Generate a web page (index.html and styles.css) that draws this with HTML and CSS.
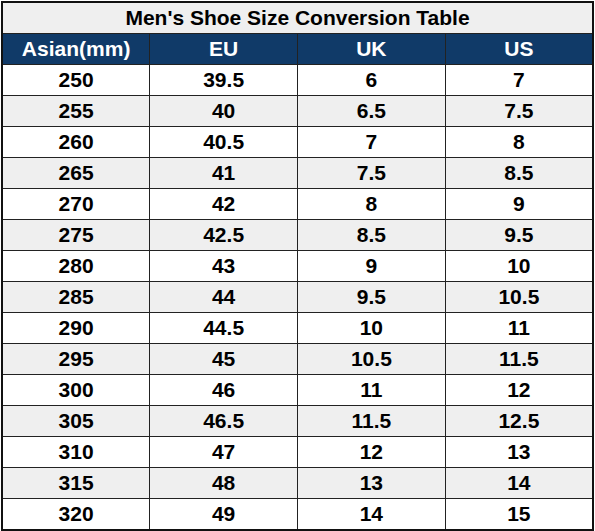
FILE: index.html
```html
<!DOCTYPE html>
<html lang="en">
<head>
  <meta charset="UTF-8" />
  <title>Men's Shoe Size Conversion Table</title>
  <link rel="stylesheet" href="styles.css">
</head>
<body>
  <table class="size-table">
    <thead>
      <tr class="title-row"><th colspan="4">Men's Shoe Size Conversion Table</th></tr>
      <tr class="head-row">
        <th>Asian(mm)</th><th>EU</th><th>UK</th><th>US</th>
      </tr>
    </thead>
    <tbody>
      <tr><td>250</td><td>39.5</td><td>6</td><td>7</td></tr>
      <tr><td>255</td><td>40</td><td>6.5</td><td>7.5</td></tr>
      <tr><td>260</td><td>40.5</td><td>7</td><td>8</td></tr>
      <tr><td>265</td><td>41</td><td>7.5</td><td>8.5</td></tr>
      <tr><td>270</td><td>42</td><td>8</td><td>9</td></tr>
      <tr><td>275</td><td>42.5</td><td>8.5</td><td>9.5</td></tr>
      <tr><td>280</td><td>43</td><td>9</td><td>10</td></tr>
      <tr><td>285</td><td>44</td><td>9.5</td><td>10.5</td></tr>
      <tr><td>290</td><td>44.5</td><td>10</td><td>11</td></tr>
      <tr><td>295</td><td>45</td><td>10.5</td><td>11.5</td></tr>
      <tr><td>300</td><td>46</td><td>11</td><td>12</td></tr>
      <tr><td>305</td><td>46.5</td><td>11.5</td><td>12.5</td></tr>
      <tr><td>310</td><td>47</td><td>12</td><td>13</td></tr>
      <tr><td>315</td><td>48</td><td>13</td><td>14</td></tr>
      <tr><td>320</td><td>49</td><td>14</td><td>15</td></tr>
    </tbody>
  </table>
</body>
</html>
```

FILE: styles.css
```css
body {
  margin: 0;
  padding: 1px 0 0 1px;
  background: #fff;
  font-family: "Liberation Sans", Arial, sans-serif;
}

.size-table {
  border-collapse: collapse;
  width: 593px;
  table-layout: fixed;
  border: 2px solid #111;
  font-weight: bold;
  color: #000;
}

.size-table th,
.size-table td {
  border: 1px solid #222;
  height: 28px;
  padding: 0 0 2px;
  text-align: center;
  font-size: 21px;
  line-height: 1;
}

.title-row th {
  background: #efefef;
  color: #000;
}

.head-row th {
  background: #103a68;
  color: #fff;
}

.size-table tbody tr:nth-child(even) {
  background: #efefef;
}
```
